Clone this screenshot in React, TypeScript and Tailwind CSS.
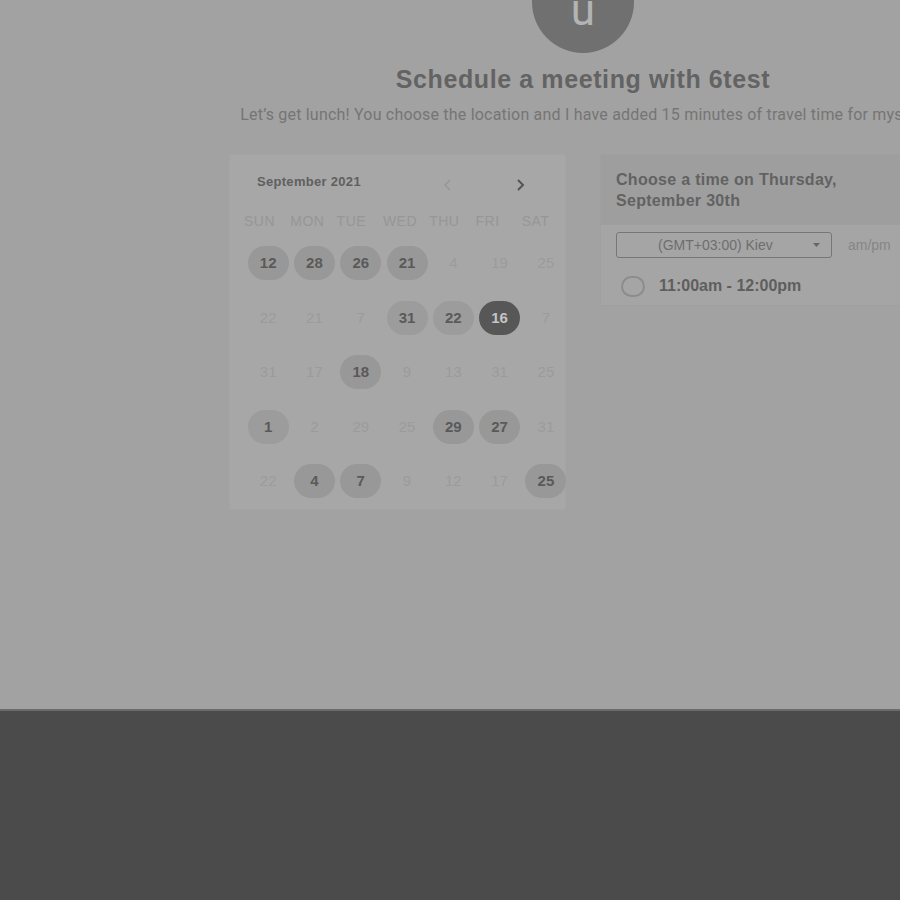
import React from "react";

type Day = { n: number; s?: "c" | "l" | "d" };

const rows: Day[][] = [
  [{ n: 12, s: "c" }, { n: 28, s: "c" }, { n: 26, s: "c" }, { n: 21, s: "c" }, { n: 4 }, { n: 19 }, { n: 25 }],
  [{ n: 22 }, { n: 21 }, { n: 7 }, { n: 31, s: "l" }, { n: 22, s: "l" }, { n: 16, s: "d" }, { n: 7 }],
  [{ n: 31 }, { n: 17 }, { n: 18, s: "c" }, { n: 9 }, { n: 13 }, { n: 31 }, { n: 25 }],
  [{ n: 1, s: "l" }, { n: 2 }, { n: 29 }, { n: 25 }, { n: 29, s: "c" }, { n: 27, s: "c" }, { n: 31 }],
  [{ n: 22 }, { n: 4, s: "c" }, { n: 7, s: "c" }, { n: 9 }, { n: 12 }, { n: 17 }, { n: 25, s: "c" }],
];

const weekdays = ["SUN", "MON", "TUE", "WED", "THU", "FRI", "SAT"];

function DayCell({ d }: { d: Day }) {
  let cls = "text-[#9b9b9b] font-normal";
  let bg = "";
  if (d.s === "c") {
    bg = "bg-[#989898]";
    cls = "text-[#5a5a5a] font-bold";
  } else if (d.s === "l") {
    bg = "bg-[#9c9c9c]";
    cls = "text-[#5a5a5a] font-bold";
  } else if (d.s === "d") {
    bg = "bg-[#575757]";
    cls = "text-[#c4c4c4] font-bold";
  }
  return (
    <div className="h-[54.5px] flex items-center justify-center">
      <div className={`w-[41px] h-[34px] rounded-full flex items-center justify-center text-[15px] ${bg} ${cls}`}>
        {d.n}
      </div>
    </div>
  );
}

export default function App() {
  return (
    <div
      className="w-[900px] h-[900px] overflow-hidden bg-[#a2a2a2] flex flex-col"
      style={{ fontFamily: '"Liberation Sans", Arial, sans-serif' }}
    >
      <div className="h-[709px] shrink-0 overflow-hidden">
        <div className="w-[1166px] flex flex-col items-center">
          {/* avatar */}
          <div className="w-[102px] h-[104px] mt-[-51px] rounded-full bg-[#707070] flex justify-center pt-[39px]">
            <span
              className="text-[44px] leading-none text-[#b3b3b3]"
              style={{ fontFamily: "Roboto, sans-serif" }}
            >
              u
            </span>
          </div>
          <h1 className="mt-[11px] text-[25px] leading-[30px] font-bold tracking-[0.6px] text-[#636363]">
            Schedule a meeting with 6test
          </h1>
          <p
            className="mt-[11px] text-[16px] leading-[20px] text-[#757575] whitespace-nowrap tracking-[0.2px]"
            style={{ fontFamily: "Roboto, sans-serif" }}
          >
            Let’s get lunch! You choose the location and I have added 15 minutes of travel time for myself.
          </p>
          <div className="mt-[29px] flex gap-[34px] items-start">
            {/* calendar */}
            <div className="w-[337px] h-[356px] bg-[#a7a7a7] border border-[#a4a4a4] box-border">
              <div className="h-[20px] mt-[17px] flex items-center pl-[27px]">
                <span className="text-[13px] font-bold tracking-[0.3px] text-[#5f5f5f] w-[185px]">September 2021</span>
                <div className="w-[10px] mt-[6px]">
                  <svg width="10" height="12" viewBox="0 0 10 12">
                    <polyline points="8,1 3,6 8,11" fill="none" stroke="#959595" strokeWidth="1.4" />
                  </svg>
                </div>
                <div className="w-[10px] ml-[64px] mt-[6px]">
                  <svg width="10" height="12" viewBox="0 0 10 12">
                    <polyline points="2,1 7,6 2,11" fill="none" stroke="#555555" strokeWidth="2" />
                  </svg>
                </div>
              </div>
              <div className="mt-[19px] h-[20px] grid grid-cols-[repeat(7,46.3px)] pl-[14px]">
                {weekdays.map((w) => (
                  <div key={w} className="text-[14px] leading-[20px] tracking-[0.5px] text-[#969696]">
                    {w}
                  </div>
                ))}
              </div>
              <div className="mt-[5px] grid grid-cols-[repeat(7,46.3px)] pl-[15px]">
                {rows.flat().map((d, i) => (
                  <DayCell key={i} d={d} />
                ))}
              </div>
            </div>
            {/* time panel */}
            <div className="w-[337px] h-[152px] bg-[#a5a5a5] border border-[#a0a0a0] box-border flex flex-col">
              <div className="h-[70px] bg-[#9e9e9e] px-[15px] pt-[14px]">
                <div className="text-[16px] leading-[21px] font-bold tracking-[0.3px] text-[#626262]">
                  Choose a time on Thursday,
                  <br />
                  September 30th
                </div>
              </div>
              <div className="mt-[7px] flex items-center px-[15px]">
                <div className="w-[216px] h-[26px] border border-[#777777] rounded-[3px] flex items-center relative">
                  <span className="ml-[41px] text-[14px] text-[#6e6e6e]">(GMT+03:00) Kiev</span>
                  <svg className="absolute right-[11px] top-[10px]" width="7" height="4" viewBox="0 0 7 4">
                    <polygon points="0,0 7,0 3.5,4" fill="#666666" />
                  </svg>
                </div>
                <span className="ml-[16px] text-[14px] text-[#868686]">am/pm</span>
              </div>
              <div className="mt-[16px] flex items-center pl-[20px]">
                <div className="w-[24px] h-[21px] rounded-full border-2 border-[#8c8c8c]" />
                <span className="ml-[14px] text-[16px] font-bold text-[#5e5e5e]">11:00am - 12:00pm</span>
              </div>
            </div>
          </div>
        </div>
      </div>
      <div className="h-[2px] shrink-0 bg-[#6c6c6c]" />
      <div className="flex-1 bg-[#4b4b4b]" />
    </div>
  );
}
